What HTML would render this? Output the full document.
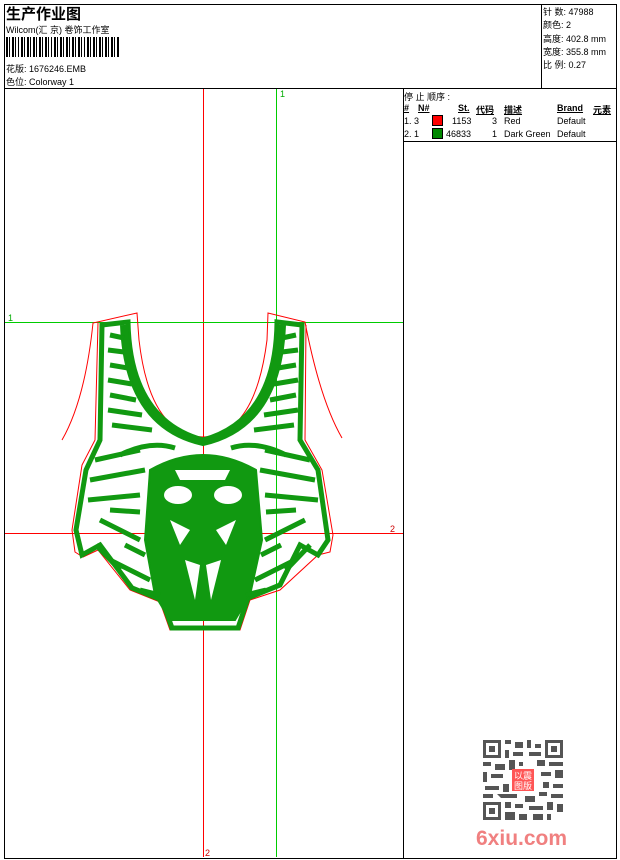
<!DOCTYPE html>
<html><head><meta charset="utf-8"><style>
body{margin:0;background:#fff;width:620px;height:860px;position:relative;overflow:hidden;font-family:"Liberation Sans","Noto Sans CJK SC",sans-serif;color:#000}
.a{position:absolute}
.t{font-size:9px;white-space:nowrap}
</style></head><body>
<div class="a" style="left:4px;top:4px;width:611px;height:853px;border:1px solid #000"></div>
<div class="a" style="left:4px;top:88px;width:612px;height:1px;background:#000"></div>
<div class="a" style="left:541px;top:4px;width:1px;height:84px;background:#000"></div>
<div class="a" style="left:403px;top:88px;width:1px;height:770px;background:#000"></div>
<div class="a" style="left:403px;top:141px;width:213px;height:1px;background:#000"></div>

<div class="a" style="left:6px;top:3px;font-size:15px;font-weight:bold">生产作业图</div>
<div class="a t" style="left:6px;top:23px">Wilcom(汇 京) 卷饰工作室</div>
<svg class="a" style="left:6px;top:37px" width="114" height="21">
<g fill="#000">
<rect x="0" y="0" width="2" height="20"/><rect x="3" y="0" width="1" height="20"/><rect x="6" y="0" width="2" height="20"/><rect x="9" y="0" width="1" height="20"/><rect x="12" y="0" width="1" height="20"/><rect x="15" y="0" width="2" height="20"/><rect x="18" y="0" width="1" height="20"/><rect x="21" y="0" width="2" height="20"/><rect x="24" y="0" width="1" height="20"/><rect x="27" y="0" width="2" height="20"/><rect x="30" y="0" width="1" height="20"/><rect x="33" y="0" width="2" height="20"/><rect x="36" y="0" width="1" height="20"/><rect x="39" y="0" width="2" height="20"/><rect x="42" y="0" width="1" height="20"/><rect x="45" y="0" width="1" height="20"/><rect x="48" y="0" width="2" height="20"/><rect x="51" y="0" width="1" height="20"/><rect x="54" y="0" width="2" height="20"/><rect x="57" y="0" width="1" height="20"/><rect x="60" y="0" width="2" height="20"/><rect x="63" y="0" width="1" height="20"/><rect x="66" y="0" width="2" height="20"/><rect x="69" y="0" width="1" height="20"/><rect x="72" y="0" width="2" height="20"/><rect x="75" y="0" width="1" height="20"/><rect x="78" y="0" width="1" height="20"/><rect x="81" y="0" width="2" height="20"/><rect x="84" y="0" width="1" height="20"/><rect x="87" y="0" width="2" height="20"/><rect x="90" y="0" width="1" height="20"/><rect x="93" y="0" width="2" height="20"/><rect x="96" y="0" width="1" height="20"/><rect x="99" y="0" width="2" height="20"/><rect x="102" y="0" width="1" height="20"/><rect x="105" y="0" width="2" height="20"/><rect x="108" y="0" width="1" height="20"/><rect x="111" y="0" width="2" height="20"/>
</g></svg>
<div class="a t" style="left:6px;top:62px">花版: 1676246.EMB</div>
<div class="a t" style="left:6px;top:75px">色位: Colorway 1</div>

<div class="a t" style="left:543px;top:6px;line-height:13.3px">针 数: 47988<br>颜色: 2<br>高度: 402.8 mm<br>宽度: 355.8 mm<br>比 例: 0.27</div>

<div class="a t" style="left:404px;top:90px">停 止 顺序 :</div>
<div class="a t" style="left:404px;top:103px;font-weight:bold;text-decoration:underline">#</div>
<div class="a t" style="left:418px;top:103px;font-weight:bold;text-decoration:underline">N#</div>
<div class="a t" style="left:458px;top:103px;font-weight:bold;text-decoration:underline">St.</div>
<div class="a t" style="left:476px;top:103px;font-weight:bold;text-decoration:underline">代码</div>
<div class="a t" style="left:504px;top:103px;font-weight:bold;text-decoration:underline">描述</div>
<div class="a t" style="left:557px;top:103px;font-weight:bold;text-decoration:underline">Brand</div>
<div class="a t" style="left:593px;top:103px;font-weight:bold;text-decoration:underline">元素</div>
<div class="a t" style="left:404px;top:116px">1. 3</div>
<div class="a" style="left:432px;top:115px;width:9px;height:9px;background:#f00;border:1px solid #000"></div>
<div class="a t" style="left:452px;top:116px">1153</div><div class="a t" style="left:492px;top:116px">3</div><div class="a t" style="left:504px;top:116px">Red</div><div class="a t" style="left:557px;top:116px">Default</div>
<div class="a t" style="left:404px;top:129px">2. 1</div>
<div class="a" style="left:432px;top:128px;width:9px;height:9px;background:#080;border:1px solid #000"></div>
<div class="a t" style="left:446px;top:129px">46833</div><div class="a t" style="left:492px;top:129px">1</div><div class="a t" style="left:504px;top:129px">Dark Green</div><div class="a t" style="left:557px;top:129px">Default</div>

<div class="a" style="left:203px;top:89px;width:1px;height:768px;background:#f00"></div>
<div class="a" style="left:276px;top:89px;width:1px;height:768px;background:#0c0"></div>
<div class="a" style="left:5px;top:322px;width:398px;height:1px;background:#0c0"></div>
<div class="a" style="left:5px;top:533px;width:398px;height:1px;background:#f00"></div>
<svg class="a" style="left:0;top:0" width="620" height="860">
<text x="280" y="97" font-size="9" fill="#0a0" font-family="Liberation Sans">1</text>
<text x="8" y="321" font-size="9" fill="#0a0" font-family="Liberation Sans">1</text>
<text x="390" y="532" font-size="9" fill="#c00" font-family="Liberation Sans">2</text>
<text x="205" y="856" font-size="9" fill="#c00" font-family="Liberation Sans">2</text>
<g fill="none" stroke="#f00" stroke-width="1">
<path d="M62,440 Q85,400 93,323 L137,313 L139,340 Q150,435 203,437 Q255,435 267,340 L268,313 L305,322 Q320,400 342,438"/>
<path d="M98,323 L95,440 L82,465 L72,530 L75,552 L83,557 L98,550 L130,590 L160,602 L170,630 L240,630 L250,600 L280,590 L318,555 L330,552 L333,535 L322,470 L305,440 L306,325"/>
</g>
<g fill="#119911" stroke="#119911">
<path d="M102,325 L128,322 Q130,420 203,440 Q276,420 277,322 L302,325 L300,440 L318,470 L328,540 L318,555 L300,545 L280,585 L248,598 L238,628 L172,628 L162,600 L132,588 L100,545 L82,555 L76,530 L86,470 L100,440 Z" fill="none" stroke-width="5"/>
<path d="M124,325 Q128,425 203,442 Q278,425 282,325" fill="none" stroke-width="8"/>
<path d="M150,470 Q203,440 256,470 L262,540 L250,595 L235,620 L170,620 L155,595 L145,540 Z" stroke-width="2"/>
<path d="M110,335 L124,338 M108,350 L124,352 M110,365 L128,368 M108,380 L132,384 M110,395 L136,400 M108,410 L142,415 M112,425 L152,430 M296,335 L282,338 M298,350 L282,352 M296,365 L278,368 M298,380 L274,384 M296,395 L270,400 M298,410 L264,415 M294,425 L254,430 M95,460 L140,450 M90,480 L145,470 M88,500 L140,495 M310,460 L265,450 M315,480 L260,470 M318,500 L265,495 M100,520 L140,540 M305,520 L265,540 M110,560 L150,580 M295,560 L255,580 M96,545 L120,570 M310,545 L286,570 M120,455 Q150,440 175,448 M286,455 Q256,440 231,448 M110,510 L140,512 M296,510 L266,512 M125,545 L145,555 M281,545 L261,555 M140,590 L160,595 M266,590 L246,595" stroke-width="5" fill="none"/>
</g>
<g fill="#fff">
<ellipse cx="178" cy="495" rx="14" ry="9"/><ellipse cx="228" cy="495" rx="14" ry="9"/>
<path d="M170,520 L190,530 L180,545 Z M236,520 L216,530 L226,545 Z M185,560 L195,600 L200,565 Z M221,560 L211,600 L206,565 Z M175,470 L230,470 L225,480 L180,480 Z"/>
</g>
</svg>

<svg class="a" style="left:481px;top:738px" width="84" height="84">
<rect width="84" height="84" fill="#fff"/>
<g fill="#555">
<rect x="2" y="2" width="18" height="18"/><rect x="64" y="2" width="18" height="18"/><rect x="2" y="64" width="18" height="18"/>
<path d="M24,2h6v4h-6zM34,4h8v6h-8zM46,2h4v8h-4zM54,6h6v4h-6zM24,12h4v8h-4zM32,14h10v4h-10zM48,14h12v4h-12zM2,24h8v4h-8zM14,26h10v6h-10zM28,22h6v10h-6zM38,24h4v4h-4zM56,22h8v6h-8zM68,24h14v4h-14zM2,34h4v10h-4zM10,36h12v4h-12zM60,34h10v4h-10zM74,32h8v8h-8zM4,48h14v4h-14zM22,46h6v8h-6zM62,44h6v6h-6zM72,46h10v4h-10zM2,56h10v4h-10zM16,56h20v4h-16zM44,58h10v6h-10zM58,54h8v4h-8zM70,56h12v4h-12zM24,64h6v6h-6zM34,66h8v4h-8zM48,68h14v4h-14zM66,64h6v8h-6zM76,66h6v8h-6zM24,74h10v8h-10zM38,76h8v6h-8zM52,76h10v6h-10zM66,76h4v6h-4z"/>
</g>
<g fill="#fff"><rect x="5" y="5" width="12" height="12"/><rect x="67" y="5" width="12" height="12"/><rect x="5" y="67" width="12" height="12"/></g>
<g fill="#555"><rect x="8" y="8" width="6" height="6"/><rect x="70" y="8" width="6" height="6"/><rect x="8" y="70" width="6" height="6"/></g>
<rect x="31" y="31" width="22" height="22" fill="#f55"/>
<text x="33" y="41" font-size="9" fill="#fff" font-family="Noto Sans CJK SC">以震</text><text x="33" y="51" font-size="9" fill="#fff" font-family="Noto Sans CJK SC">图版</text>
</svg>
<div class="a" style="left:476px;top:827px;font-size:21px;font-weight:bold;color:#f08080;font-family:'Liberation Sans',sans-serif">6xiu.com</div>
</body></html>
